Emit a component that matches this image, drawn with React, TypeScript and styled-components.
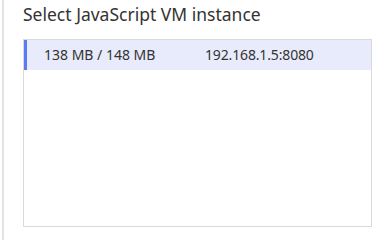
import styled, { createGlobalStyle } from "styled-components";

const GlobalStyle = createGlobalStyle`
  html, body {
    margin: 0;
    padding: 0;
    background: #ffffff;
    font-family: "Noto Sans", "Open Sans", sans-serif;
  }
`;

const Frame = styled.div`
  margin-left: 2px;
  height: 240px;
  border-left: 2px solid #e3e3e3;
  padding: 0 18px 0 19px;
  box-sizing: border-box;
`;

const Title = styled.p`
  margin: 0;
  padding-top: 2px;
  height: 39px;
  font-size: 17.5px;
  color: #333333;
  box-sizing: border-box;
  white-space: nowrap;
`;

const List = styled.div`
  width: 349px;
  height: 188px;
  border: 1px solid #d9d9d9;
  box-sizing: border-box;
`;

const Row = styled.div<{ $selected?: boolean }>`
  display: flex;
  align-items: center;
  height: 30px;
  padding: 0 0 2px 17px;
  box-sizing: border-box;
  border-left: 3px solid ${(p) => (p.$selected ? "#5b7cf0" : "transparent")};
  background-color: ${(p) => (p.$selected ? "#e8ebfb" : "transparent")};
  font-size: 14px;
  color: #333333;
`;

const Memory = styled.span`
  width: 161px;
`;

const Address = styled.span`
  letter-spacing: -0.15px;
`;

const instances = [{ memory: "138 MB / 148 MB", address: "192.168.1.5:8080" }];

export default function App() {
  return (
    <>
      <GlobalStyle />
      <Frame>
        <Title>Select JavaScript VM instance</Title>
        <List>
          {instances.map((vm, i) => (
            <Row key={vm.address} $selected={i === 0}>
              <Memory>{vm.memory}</Memory>
              <Address>{vm.address}</Address>
            </Row>
          ))}
        </List>
      </Frame>
    </>
  );
}
